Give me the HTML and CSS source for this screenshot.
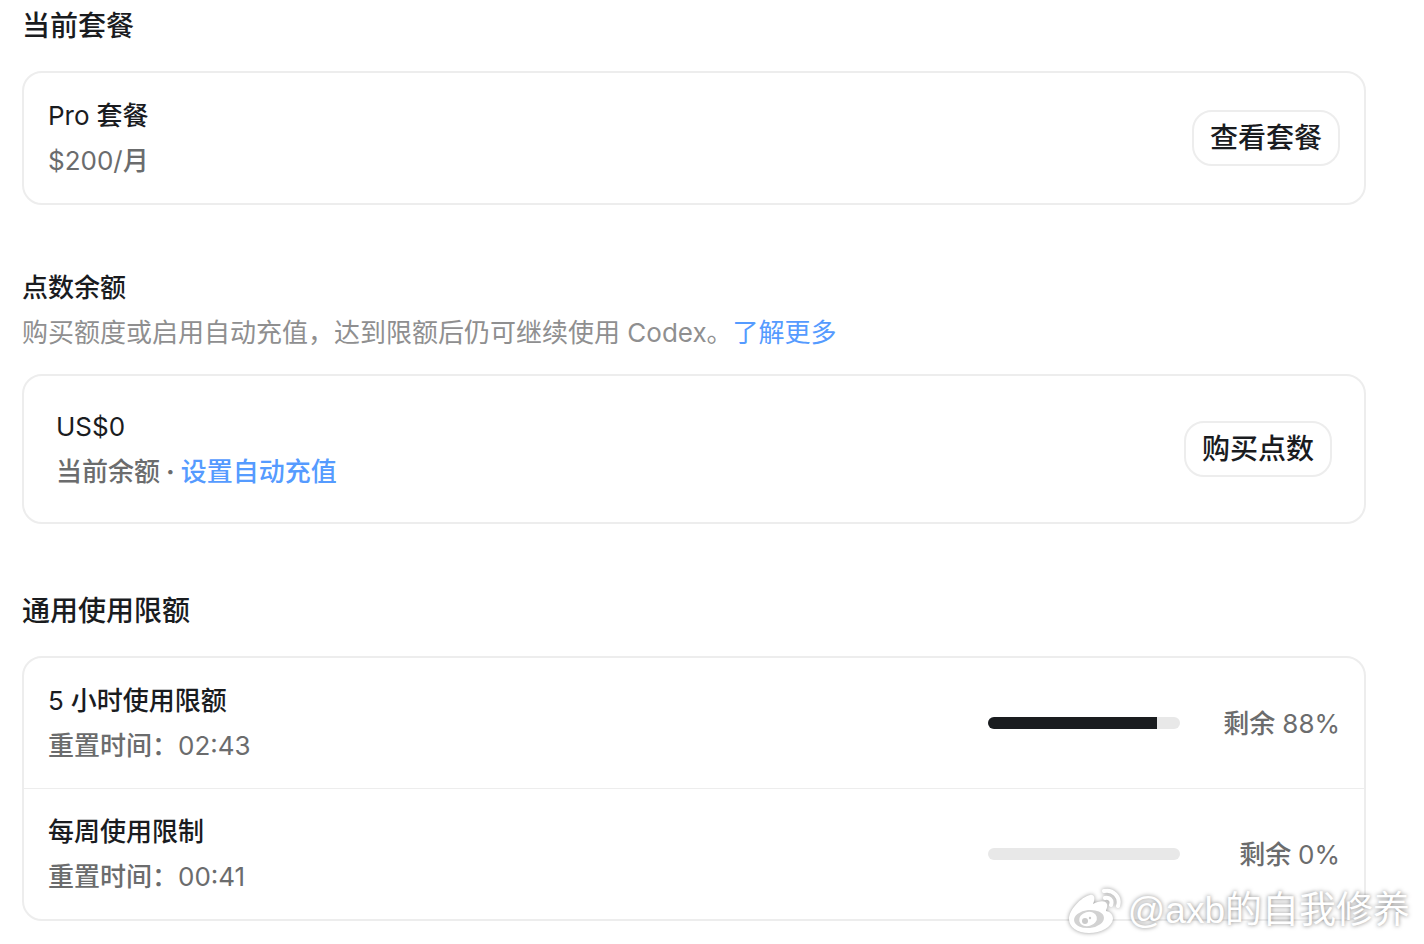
FILE: index.html
```
<!DOCTYPE html>
<html lang="zh-CN">
<head>
    <meta charset="UTF-8">
    <meta name="viewport" content="width=device-width, initial-scale=1.0">
    <title>套餐与用量</title>
    <link rel="stylesheet" href="styles.css">
</head>
<body>
    <main class="settings">
        <section>
            <h2 class="section-title">当前套餐</h2>
            <div class="card">
                <div class="row">
                    <div class="row-text">
                        <p class="label"><span class="latin">Pro</span> 套餐</p>
                        <p class="sub"><span class="latin">$200/</span>月</p>
                    </div>
                    <button type="button" class="button">查看套餐</button>
                </div>
            </div>
        </section>

        <section>
            <h2 class="section-title small">点数余额</h2>
            <p class="description">购买额度或启用自动充值，达到限额后仍可继续使用 Codex。<a href="#">了解更多</a></p>
            <div class="card">
                <div class="row roomy">
                    <div class="row-text">
                        <p class="label"><span class="latin">US$0</span></p>
                        <p class="sub">当前余额<span class="dot">·</span><a href="#">设置自动充值</a></p>
                    </div>
                    <button type="button" class="button">购买点数</button>
                </div>
            </div>
        </section>

        <section>
            <h2 class="section-title">通用使用限额</h2>
            <div class="card">
                <div class="row">
                    <div class="row-text">
                        <p class="label"><span class="latin">5</span> 小时使用限额</p>
                        <p class="sub">重置时间：<span class="latin">02:43</span></p>
                    </div>
                    <div class="bar" role="progressbar" aria-label="5 小时使用限额" aria-valuenow="88" aria-valuemin="0" aria-valuemax="100">
                        <div class="bar-fill" style="width: 88%"></div>
                    </div>
                    <p class="remaining">剩余 <span class="latin">88%</span></p>
                </div>
                <div class="row">
                    <div class="row-text">
                        <p class="label">每周使用限制</p>
                        <p class="sub">重置时间：<span class="latin">00:41</span></p>
                    </div>
                    <div class="bar" role="progressbar" aria-label="每周使用限制" aria-valuenow="0" aria-valuemin="0" aria-valuemax="100">
                        <div class="bar-fill" style="width: 0%"></div>
                    </div>
                    <p class="remaining">剩余 <span class="latin">0%</span></p>
                </div>
            </div>
        </section>
    </main>

    <div class="watermark">
        <svg class="watermark-logo" viewBox="0 0 54 46" width="54" height="46" aria-hidden="true">
            <path fill="#fff" d="M22 7C26 6 28 10 25 16C31 13 37 12 39 16C40 19 38 21 38 23C43 24 45 27 45 31C44 39 33 45 21 45C9 45 1 39 1 31C1 22 13 9 22 7Z"/>
            <ellipse cx="21" cy="31" rx="15" ry="9" fill="#d2d2d2" transform="rotate(-6 21 31)"/>
            <ellipse cx="20" cy="31" rx="9" ry="7" fill="#fff" transform="rotate(-15 20 31)"/>
            <circle cx="17" cy="33" r="3" fill="#cbcbcb"/>
            <circle cx="22" cy="30" r="1.2" fill="#cbcbcb"/>
            <path fill="none" stroke="#fff" stroke-width="4" stroke-linecap="round" d="M36 3C45 1 53 9 50 18M37 10C41 9 45 12 43 17"/>
        </svg>
        <span>@axb的自我修养</span>
    </div>
</body>
</html>
```
FILE: styles.css
```
* {
    box-sizing: border-box;
}

body {
    margin: 0;
    background: #fff;
    color: #1a1c1f;
    font-family: Inter, "Noto Sans CJK SC", sans-serif;
    font-size: 26px;
    font-weight: 500;
    line-height: 37px;
}

h2,
p {
    margin: 0;
}

a {
    color: #559bff;
    text-decoration: none;
}

a:hover {
    text-decoration: underline;
}

.settings {
    display: flex;
    flex-direction: column;
    gap: 64px;
    padding: 3px 58px 23px 22px;
}

.section-title {
    margin-bottom: 21px;
    font-size: 28px;
    font-weight: 500;
    line-height: 47px;
}

.section-title.small {
    margin-bottom: 8px;
    font-size: 26px;
    line-height: 37px;
}

.description {
    margin-bottom: 23px;
    color: #8f8f90;
    font-weight: 400;
}

/* Cards */
.card {
    border: 2px solid #ededed;
    border-radius: 20px;
}

.row {
    display: flex;
    align-items: center;
    padding: 24px;
}

.row + .row {
    border-top: 1px solid #ededed;
}

.row.roomy {
    padding: 32px;
}

.row-text {
    display: flex;
    flex: 1;
    flex-direction: column;
    gap: 8px;
}

.latin {
    font-weight: 400;
}

.dot {
    padding: 0 6px;
    font-weight: 700;
}

.sub,
.remaining {
    color: #6b6c6d;
}

.button {
    height: 56px;
    padding: 0 16px;
    border: 2px solid #ededed;
    border-radius: 20px;
    background: #fff;
    color: inherit;
    font: inherit;
    font-size: 28px;
    cursor: pointer;
}

.button:hover {
    background: #f7f7f7;
}

/* Usage bars */
.bar {
    width: 192px;
    height: 12px;
    border-radius: 6px;
    background: #e8e8e8;
    overflow: hidden;
}

.bar-fill {
    height: 100%;
    background: #1a1c1f;
}

.remaining {
    width: 160px;
    text-align: right;
}

/* Watermark */
.watermark {
    position: absolute;
    right: 14px;
    bottom: 9px;
    display: flex;
    align-items: center;
    gap: 6px;
    color: #fff;
    font-family: "Liberation Sans", "Noto Sans CJK SC", sans-serif;
    font-size: 37px;
    font-weight: 400;
    line-height: 48px;
    text-shadow: 0 0 4px rgba(0, 0, 0, 0.5);
    pointer-events: none;
}

.watermark-logo {
    filter: drop-shadow(0 0 2px rgba(0, 0, 0, 0.4));
}
```
